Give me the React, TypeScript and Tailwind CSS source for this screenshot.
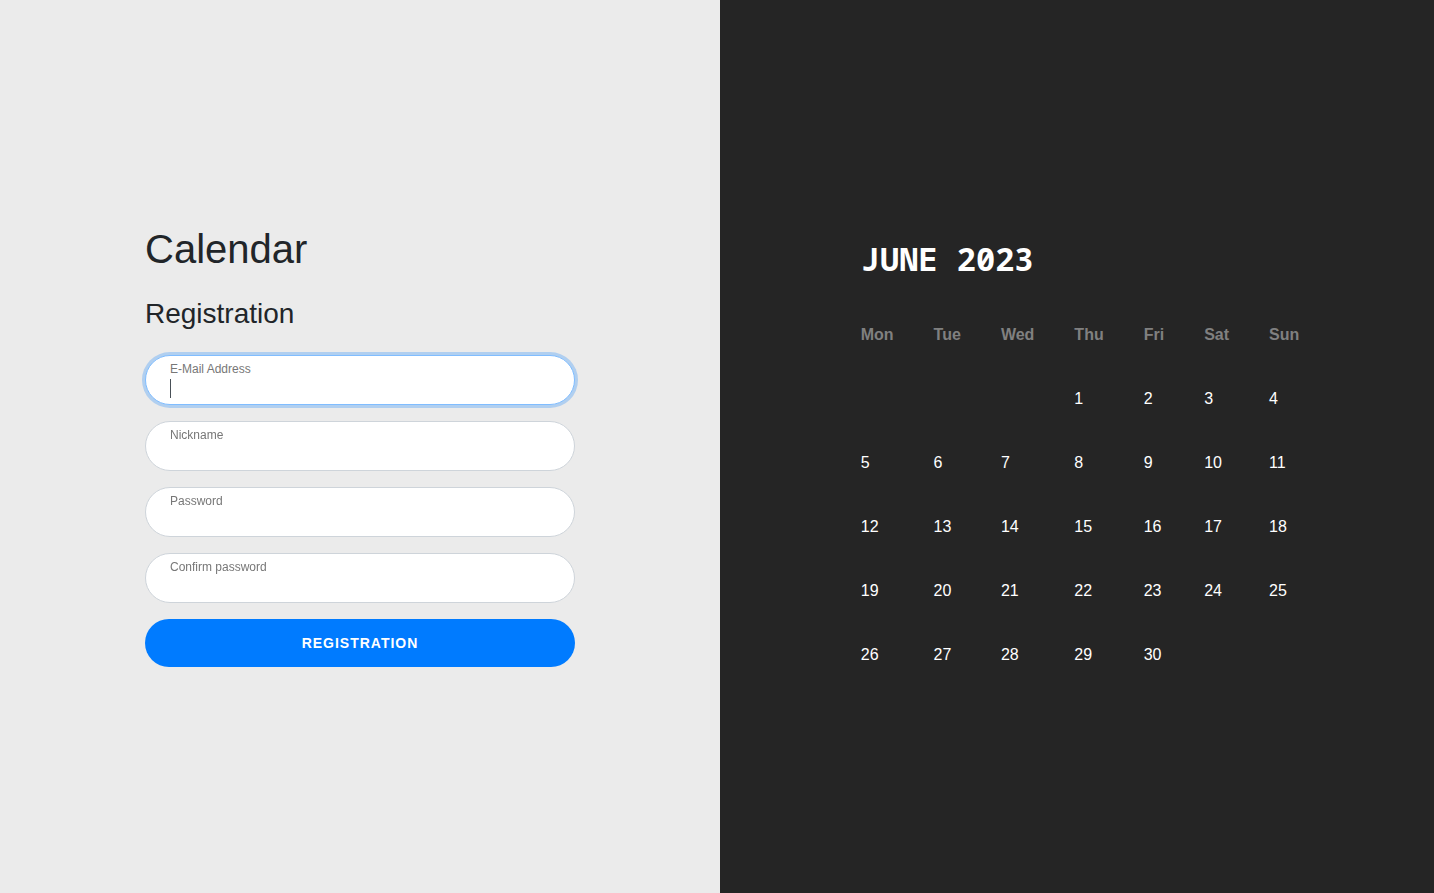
const fields = [
  { id: "email", label: "E-Mail Address", type: "email" },
  { id: "nickname", label: "Nickname", type: "text" },
  { id: "password", label: "Password", type: "password" },
  { id: "confirm-password", label: "Confirm password", type: "password" },
];

const weekdays = ["Mon", "Tue", "Wed", "Thu", "Fri", "Sat", "Sun"];

const weeks: (number | null)[][] = [
  [null, null, null, 1, 2, 3, 4],
  [5, 6, 7, 8, 9, 10, 11],
  [12, 13, 14, 15, 16, 17, 18],
  [19, 20, 21, 22, 23, 24, 25],
  [26, 27, 28, 29, 30, null, null],
];

type FieldProps = { id: string; label: string; type: string; autoFocus?: boolean };

function Field({ id, label, type, autoFocus }: FieldProps) {
  return (
    <div className="relative mb-4">
      <input
        id={id}
        type={type}
        placeholder=" "
        autoFocus={autoFocus}
        className="peer block h-[50px] w-full rounded-full border border-[#ced4da] bg-white px-6 pt-5 pb-1 text-base text-[#495057] outline-none placeholder-shown:caret-transparent focus:border-[#80bdff] focus:shadow-[0_0_0_3px_rgba(0,123,255,0.25)]"
      />
      <label htmlFor={id} className="absolute top-[5px] left-[25px] text-[12px] leading-[18px] text-[#777777]">
        {label}
      </label>
      <span className="absolute top-6 left-[25px] hidden h-[19px] w-px bg-[#495057] peer-placeholder-shown:peer-focus:block" />
    </div>
  );
}

function RegistrationForm() {
  return (
    <form className="w-full max-w-[430px]" onSubmit={(event) => event.preventDefault()}>
      <h1 className="mb-6 text-[40px] leading-[48px]">Calendar</h1>
      <h2 className="mb-6 text-[28px] leading-[34px]">Registration</h2>
      {fields.map((field, index) => (
        <Field key={field.id} {...field} autoFocus={index === 0} />
      ))}
      <button
        type="submit"
        className="block h-12 w-full rounded-full bg-[#007bff] text-[14px] font-bold tracking-[1px] text-white uppercase"
      >
        Registration
      </button>
    </form>
  );
}

function MonthCalendar() {
  return (
    <div>
      <h2 className="mb-5 px-5 font-['Noto_Sans_Mono','DejaVu_Sans_Mono',monospace] text-[32px] leading-[48px] font-bold text-white">
        JUNE 2023
      </h2>
      <table className="border-collapse text-left text-base leading-6 text-white">
        <thead>
          <tr>
            {weekdays.map((day) => (
              <th key={day} scope="col" className="p-5 font-bold text-[#808080]">
                {day}
              </th>
            ))}
          </tr>
        </thead>
        <tbody>
          {weeks.map((week, row) => (
            <tr key={row}>
              {week.map((day, column) => (
                <td key={column} className="p-5">
                  {day}
                </td>
              ))}
            </tr>
          ))}
        </tbody>
      </table>
    </div>
  );
}

export default function App() {
  return (
    <main className="grid min-h-screen grid-cols-[720fr_714fr] bg-[#ebebeb] font-['Liberation_Sans',Arial,sans-serif] text-[#212529]">
      <section className="flex items-center justify-center px-4 pb-px">
        <RegistrationForm />
      </section>
      <section className="flex items-center justify-center bg-[#252525] pt-7 pl-1.5">
        <MonthCalendar />
      </section>
    </main>
  );
}
